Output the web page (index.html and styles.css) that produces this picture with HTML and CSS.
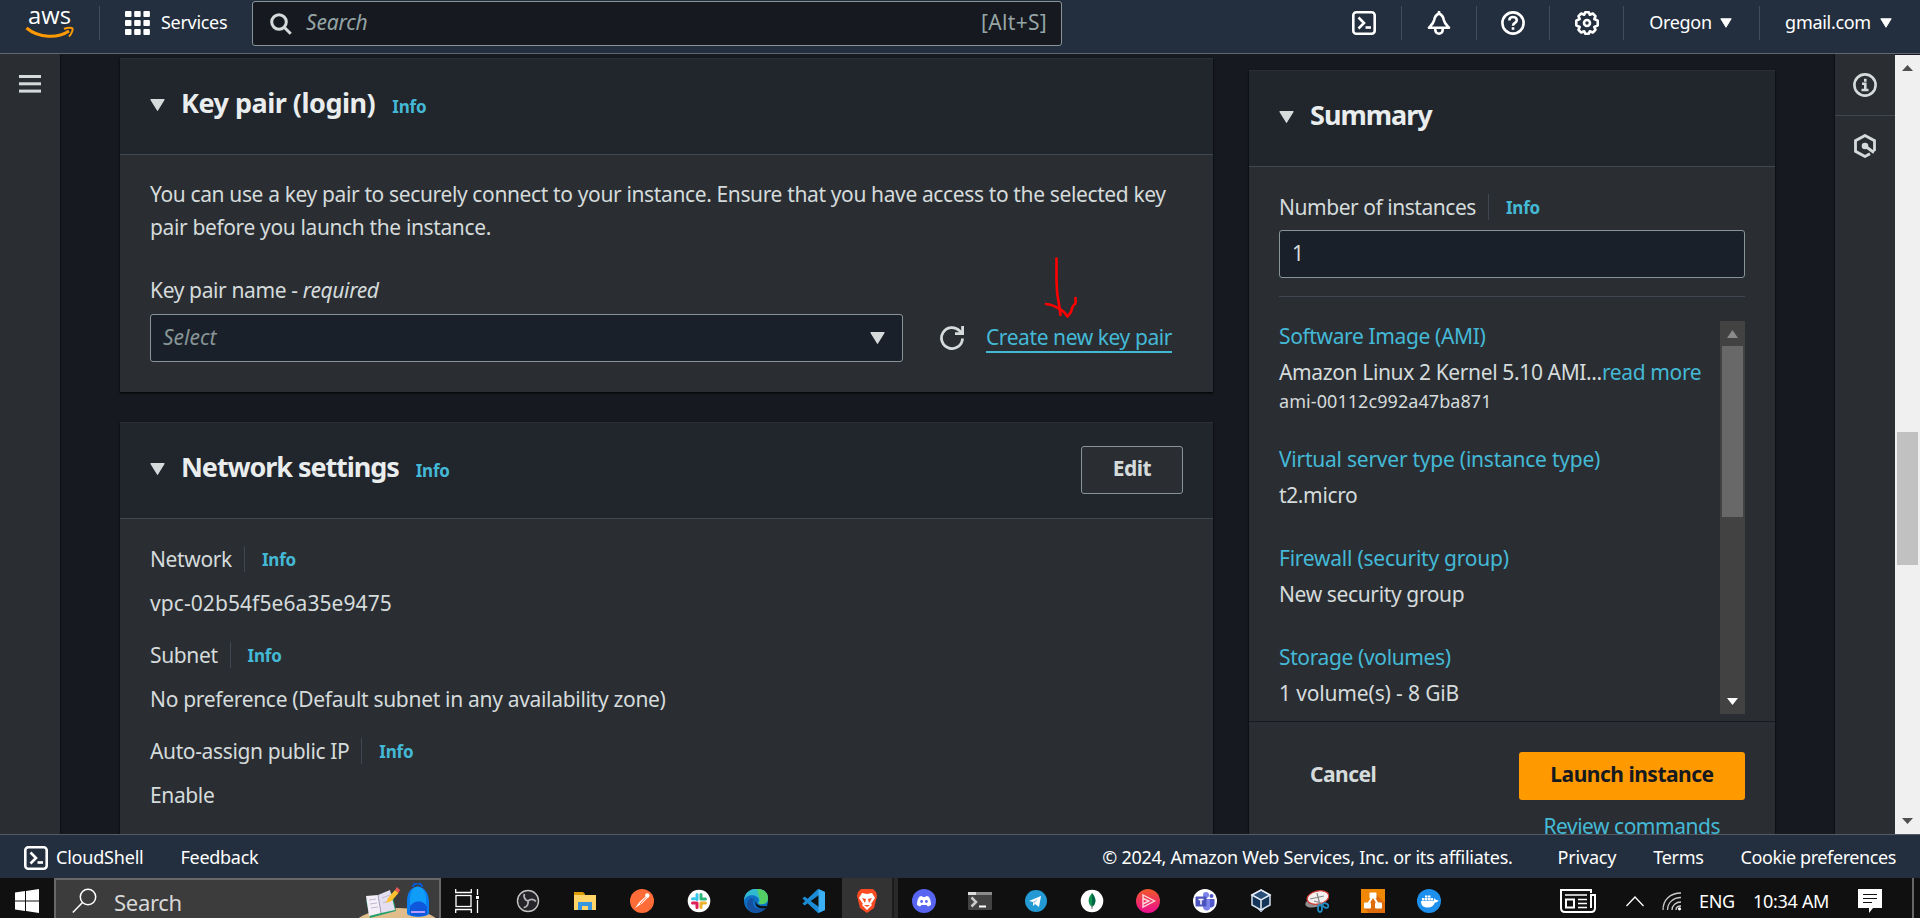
FILE: index.html
```html
<!DOCTYPE html>
<html lang="en">
<head>
<meta charset="utf-8">
<title>Launch an instance | EC2</title>
<link rel="stylesheet" href="styles.css">
</head>
<body>
<svg class="defs" width="0" height="0">
  <symbol id="shell" viewBox="0 0 24 24"><rect x="1.300" y="1.300" width="21.400" height="21.400" rx="3" fill="none" stroke="#fff" stroke-width="2.600"/><path d="M6.500 6.500l5.500 5.500-5.500 5.500" fill="none" stroke="#fff" stroke-width="2.600"/><path d="M13.500 16.500h5.500" stroke="#fff" stroke-width="2.600"/></symbol>
  <symbol id="caret" viewBox="0 0 15 12"><path d="M1 0.700h13L7.500 11.300z" fill="currentColor" stroke="currentColor" stroke-width="1.200" stroke-linejoin="round"/></symbol>
</svg>
<header class="nav">
  <div class="nav-logo">
    <svg class="logo" width="50" height="30" viewBox="0 0 50 30"><text x="3" y="15" class="logo-text" textLength="43" lengthAdjust="spacingAndGlyphs">aws</text><path d="M1.500 19C14 29.500 33 29.500 44 22" fill="none" stroke="#ff9900" stroke-width="3"/><path d="M39 20c4-2 8-1.500 8.500-.5s-.5 5-3.500 8" fill="none" stroke="#ff9900" stroke-width="2"/></svg>
  </div>
  <div class="nav-services">
    <svg width="25" height="24" viewBox="0 0 25 24" fill="#fff"><rect width="6.500" height="6" rx="1"/><rect x="9.200" width="6.500" height="6" rx="1"/><rect x="18.400" width="6.500" height="6" rx="1"/><rect y="9" width="6.500" height="6" rx="1"/><rect x="9.200" y="9" width="6.500" height="6" rx="1"/><rect x="18.400" y="9" width="6.500" height="6" rx="1"/><rect y="18" width="6.500" height="6" rx="1"/><rect x="9.200" y="18" width="6.500" height="6" rx="1"/><rect x="18.400" y="18" width="6.500" height="6" rx="1"/></svg>
    <span class="nav-text">Services</span>
  </div>
  <div class="nav-search">
    <svg width="22" height="22" viewBox="0 0 22 22" fill="none" stroke="#d5dbdb" stroke-width="3"><circle cx="9" cy="9" r="7.300"/><path d="M14.200 14.200l6.500 6.500"/></svg>
    <span class="nav-placeholder">Search</span>
    <span class="nav-key">[Alt+S]</span>
  </div>
  <div class="nav-tools">
    <div class="cell c1"><svg width="24" height="24"><use href="#shell"/></svg></div>
    <div class="cell c2"><svg width="24" height="24" viewBox="0 0 24 24" fill="none" stroke="#fff" stroke-width="2.600" stroke-linejoin="round"><path d="M12 2.500c-3.500 1.500-4.500 4-4.800 6.500C6.500 12.500 4.500 14 2 16.700h20C19.500 14 17.500 12.500 16.800 9 16.500 6.500 15.500 4 12 2.500z"/><path d="M12 0v3"/><path d="M8.300 17.500v1.500a3.700 3.700 0 0 0 7.400 0v-1.500"/></svg></div>
    <div class="cell c3"><svg width="24" height="24" viewBox="0 0 24 24" fill="none" stroke="#fff" stroke-width="2.600"><circle cx="12" cy="12" r="10.600"/><path d="M8.300 9.500C8.300 7 10 6 12 6s3.800 1.200 3.800 3.300c0 2.600-3.800 2.600-3.800 5.400"/><path d="M12 16.200v2.600"/></svg></div>
    <div class="cell c3"><svg width="24" height="24" viewBox="0 0 24 24" fill="none" stroke="#fff"><path stroke-width="2.600" stroke-linejoin="round" d="M10.200 1.300h3.600l1 2.400 3-1.200 2.700 2.700-1.200 2.800 3.400 1.700v4.600l-3.400 1.700 1.200 2.800-2.700 2.700-3-1.200-1 2.400h-3.600l-1-2.400-3 1.200-2.700-2.700L4.700 16l-3.400-1.700V9.700L4.700 8 3.500 5.200l2.700-2.700 3 1.200z"/><circle cx="12" cy="12" r="3" stroke-width="2.600"/></svg></div>
    <div class="cell c4"><span class="nav-text">Oregon</span><svg class="caret-nav"><use href="#caret"/></svg></div>
    <div class="cell c5"><span class="nav-text">gmail.com</span><svg class="caret-nav"><use href="#caret"/></svg></div>
  </div>
</header>

<div class="workspace">
  <aside class="rail rail-left">
    <svg width="22" height="20" viewBox="0 0 22 20" fill="#d5dbdb"><rect y="1" width="22" height="3"/><rect y="8.300" width="22" height="3"/><rect y="15.600" width="22" height="3"/></svg>
  </aside>
  <main class="content">
    <div class="forms">
      <section class="card">
        <div class="card-head"><svg class="caret"><use href="#caret"/></svg><h2 class="t-key">Key pair (login)</h2><a class="info">Info</a></div>
        <div class="card-body">
          <p class="desc">You can use a key pair to securely connect to your instance. Ensure that you have access to the selected key<br>pair before you launch the instance.</p>
          <div class="label">Key pair name - <em>required</em></div>
          <div class="select-row">
            <div class="field select"><em>Select</em><svg class="caret"><use href="#caret"/></svg></div>
            <svg class="refresh" width="24" height="24" viewBox="0 0 24 24" fill="none" stroke="#d5dbdb" stroke-width="2.800"><path d="M22.500 12.500A10.500 10.500 0 1 1 19.500 4.700L22 7.300"/><path d="M22.600 0v7.600H15"/></svg>
            <a class="create">Create new key pair</a>
            <svg class="mark" width="40" height="66" viewBox="0 0 40 66" fill="none" stroke="#f00" stroke-width="2.600" stroke-linecap="round" stroke-linejoin="round"><path d="M13.500 3.500v22c0 8 1 17 2.500 24 .8 4 1 7 1.500 10.500"/><path d="M3 49c7 0 12 4 18 8l3.500 4.500L28 57c1-5 2-7 4.500-8.500V43"/></svg>
          </div>
        </div>
      </section>
      <section class="card card-net">
        <div class="card-head"><svg class="caret"><use href="#caret"/></svg><h2 class="t-net">Network settings</h2><a class="info">Info</a><button class="btn edit">Edit</button></div>
        <div class="card-body">
          <div class="row"><span class="term">Network</span><a class="info">Info</a></div>
          <div class="value v-id">vpc-02b54f5e6a35e9475</div>
          <div class="row"><span class="term">Subnet</span><a class="info">Info</a></div>
          <div class="value v-pref">No preference (Default subnet in any availability zone)</div>
          <div class="row"><span class="term">Auto-assign public IP</span><a class="info">Info</a></div>
          <div class="value">Enable</div>
        </div>
      </section>
    </div>
    <section class="card summary">
      <div class="card-head"><svg class="caret"><use href="#caret"/></svg><h2 class="t-sum">Summary</h2></div>
      <div class="card-body">
        <div class="row row-tight"><span class="term">Number of instances</span><a class="info">Info</a></div>
        <div class="field count">1</div>
        <div class="details">
          <div class="items">
            <div class="item"><a>Software Image (AMI)</a><div class="item-v">Amazon Linux 2 Kernel 5.10 AMI...<a>read more</a></div><small>ami-00112c992a47ba871</small></div>
            <div class="item"><a class="t-wide">Virtual server type (instance type)</a><div class="item-v">t2.micro</div></div>
            <div class="item"><a class="t-wide">Firewall (security group)</a><div class="item-v">New security group</div></div>
            <div class="item"><a>Storage (volumes)</a><div class="item-v v-vol">1 volume(s) - 8 GiB</div></div>
          </div>
          <div class="inner-scroll">
            <svg width="11" height="8" viewBox="0 0 11 8"><path d="M5.500 0L11 8H0z" fill="#8a8a8a"/></svg>
            <div class="inner-thumb"></div>
            <svg class="down" width="11" height="7" viewBox="0 0 11 7"><path d="M0 0h11L5.500 7z" fill="#fff"/></svg>
          </div>
        </div>
      </div>
      <div class="actions">
        <div class="actions-row"><span class="cancel">Cancel</span><button class="btn launch">Launch instance</button></div>
        <a class="review">Review commands</a>
      </div>
    </section>
  </main>
  <aside class="rail rail-right">
    <div class="rail-cell"><svg width="24" height="24" viewBox="0 0 24 24" fill="none" stroke="#d5dbdb" stroke-width="2.600"><circle cx="12" cy="12" r="10.600"/><path d="M9 10.800h3.300v6M8.500 17h7M12.300 5.800v3"/></svg></div>
    <div class="rail-cell"><svg width="24" height="24" viewBox="0 0 24 24" fill="none" stroke="#d5dbdb" stroke-width="2.800"><path d="M21.500 17V6.700L12 1.500 2.500 6.700v10.600L12 22.500l5-2.800"/><circle cx="12" cy="12" r="3.300" fill="#d5dbdb" stroke="none"/><path d="M12 12l9 6.500"/></svg></div>
  </aside>
  <div class="scrollbar">
    <svg width="11" height="6" viewBox="0 0 11 6"><path d="M5.500 0L11 6H0z" fill="#505050"/></svg>
    <div class="thumb"></div>
    <svg class="down" width="11" height="6" viewBox="0 0 11 6"><path d="M0 0h11L5.500 6z" fill="#505050"/></svg>
  </div>
</div>

<footer class="foot">
  <svg width="24" height="24"><use href="#shell"/></svg>
  <span class="f-shell">CloudShell</span>
  <span class="f-feed">Feedback</span>
  <span class="f-copy">© 2024, Amazon Web Services, Inc. or its affiliates.</span>
  <span class="f-priv">Privacy</span>
  <span class="f-terms">Terms</span>
  <span class="f-cook">Cookie preferences</span>
</footer>

<div class="taskbar">
  <div class="start"><svg width="24" height="24" viewBox="0 0 24 24" fill="#fff"><path d="M0 3.500l10-1.400v9.400H0zM11 2l13-2v11.500H11zM0 12.500h10v9.400L0 20.500zM11 12.500h13V24l-13-2z"/></svg></div>
  <div class="tsearch">
    <svg width="26" height="26" viewBox="0 0 26 26" fill="none" stroke="#fff" stroke-width="1.500"><circle cx="16" cy="9" r="7.700"/><path d="M10.500 14.500L.8 24.500"/></svg>
    <span>Search</span>
    <svg class="art" width="82" height="36" viewBox="0 0 82 36">
      <path d="M0 36C22 22 60 21 80 36z" fill="#e2bd8c"/>
      <path d="M9 17l4 18 26-7-4-18z" fill="#27a06a"/>
      <path d="M9 13l12-1 3 18-12 3z" fill="#f3eef8"/><path d="M21 12l12-5 5 20-14 3z" fill="#e4dff0"/><path d="M21 12l3 18" stroke="#a8a0bd"/><path d="M12 17l7-1M13 21l7-1M14 25l7-1M25 15l8-3M26 20l7-3" stroke="#c1bad2"/>
      <path d="M29 20l2-5 7-8 3.500 3-7 8z" fill="#ffc12e"/><path d="M38 7l3.500 3 1.500-3-3-3z" fill="#ef5a55"/>
      <path d="M56 4c0-5 9-5 9 0" fill="none" stroke="#0757cf" stroke-width="2.500"/><path d="M50 18C50-1 71-1 72 18v12c0 5-22 5-22 0z" fill="#087cf0"/><path d="M53 15C54 0 67 0 69 14v8H53z" fill="#109df8"/><path d="M53 26c0-10 17-10 17 0v5c0 3-17 3-17 0z" fill="#1058db"/><path d="M54 29h14" stroke="#b89cff" stroke-width="2"/>
    </svg>
  </div>
  <div class="apps apps-before">
    <div class="app app-view"><svg viewBox="0 0 26 24" fill="none" stroke="#fff" stroke-width="1.300"><rect x="1" y="6.500" width="15" height="11"/><path d="M.7 0v3.500h15.600V0M.7 24v-3.500h15.600V24M22.500 0v6M22.500 11v13"/><rect x="21" y="7" width="3" height="3" fill="#fff" stroke="none"/></svg></div>
    <div class="app"><svg viewBox="0 0 24 24"><circle cx="12" cy="12" r="10.500" fill="#252428" stroke="#c4c4c4" stroke-width="1.400"/><g fill="none" stroke="#b8b8b8" stroke-width="1.800"><path d="M12 12c-3-1-5-4-3.500-7"/><path d="M12 12c-3-1-5-4-3.500-7" transform="rotate(120 12 12)"/><path d="M12 12c-3-1-5-4-3.500-7" transform="rotate(240 12 12)"/></g></svg></div>
    <div class="app"><svg viewBox="0 0 24 24"><path d="M1 3h9l2 2v5H1z" fill="#dc9e08"/><path d="M1 6h22v15H1z" fill="#ffd567"/><path d="M5 21v-8h14v8h-4v-4H9v4z" fill="#3895df"/></svg></div>
    <div class="app"><svg viewBox="0 0 24 24"><circle cx="12" cy="12" r="12" fill="#ff6c37"/><path d="M5 19l4.500-6L16 7l2 1.500-6 6z" fill="#fff"/><circle cx="17.300" cy="6.500" r="2.200" fill="#fff"/><path d="M10 15l6-6.500" stroke="#ff6c37"/></svg></div>
    <div class="app"><svg viewBox="0 0 24 24"><circle cx="12" cy="12" r="11.300" fill="#fff"/><g stroke-width="3" stroke-linecap="round"><path d="M10 5.500v5M5.500 9.800h2" stroke="#36c5f0"/><path d="M14 5.500v4.500M14 10h4.500" stroke="#2eb67d"/><path d="M14 14v4.500M14 14h4.500" stroke="#ecb22e"/><path d="M10 14v4.500M5.500 14H10" stroke="#e01e5a"/></g></svg></div>
    <div class="app"><svg viewBox="0 0 24 24"><circle cx="12" cy="12" r="12" fill="#0c6fc3"/><path d="M0 12C0-4 24-4 24 9c0 5-4 7-9 6-2-1 0-2 0-4C14 5 2 4 0 12z" fill="#30b9cf"/><path d="M13 0c7 0 11 4 11 9 0 5-4 7-9 6 0-1 1-2 1-4z" fill="#54cf63"/><path d="M10 10c-4 6 2 12 11 9-4 7-17 6-18-3 0-5 4-8 7-6z" fill="#1650a0"/><path d="M13 10c-3 3 0 8 9 7l1 1-1 1c-9 2-13-4-9-9z" fill="#101010"/></svg></div>
    <div class="app"><svg viewBox="0 0 24 24"><path d="M17 0l7 3v18l-7 3L1.500 9.500l2-2L18 18V6L3.500 16.500l-2-2z" fill="#1c8bd5"/><path d="M17.500 0L24 3v18l-6.500 3z" fill="#3baef4"/></svg></div>
  </div>
  <div class="app app-on"><svg viewBox="0 0 24 24"><path d="M6 0h12l3 3 1 4-3 12-7 5-7-5L2 7l1-4z" fill="#fb4b22"/><path d="M7 4l5 1 5-1 3 5-4 6 1 1-5 5-5-5 1-1-4-6z" fill="#fff"/><path d="M7 9l4 1-1 4zM17 9l-4 1 1 4zM9 16h6l-3 2z" fill="#fb4b22"/></svg></div>
  <div class="apps apps-after">
    <div class="app"><svg viewBox="0 0 24 24"><circle cx="12" cy="12" r="12" fill="#5865f2"/><path d="M5 16c0-4 1-7 2.500-8.500L10 7l.8 1h2.400l.8-1 2.500.5C18 9 19 12 19 16l-3 1.500-1.500-1.500h-5L8 17.500z" fill="#fff"/><circle cx="9.600" cy="12.500" r="1.400" fill="#5865f2"/><circle cx="14.400" cy="12.500" r="1.400" fill="#5865f2"/></svg></div>
    <div class="app"><svg viewBox="0 0 24 24"><rect y="3" width="24" height="18" rx="1" fill="#434343"/><path d="M0 3h24v3H0z" fill="#8b8b8b"/><path d="M0 3h8v3H0z" fill="#ddd"/><path d="M3.500 8.500L8 13l-4.500 4.500" fill="none" stroke="#ccc" stroke-width="2.500"/><path d="M11 17.500h7" stroke="#fff" stroke-width="2"/></svg></div>
    <div class="app"><svg viewBox="0 0 24 24"><circle cx="12" cy="12" r="11" fill="#239ad4"/><path d="M5 12l12-5-2 11-4-3-2 2v-4z" fill="#fff"/><path d="M9 13l5-3.500-3.500 5z" fill="#a7cfe5"/></svg></div>
    <div class="app"><svg viewBox="0 0 24 24"><circle cx="12" cy="12" r="11.300" fill="#fff"/><path d="M12 4c5 6 4 11 0 14-4-3-5-8 0-14z" fill="#12924f"/><path d="M12 4c5 6 4 11 0 14z" fill="#046747"/><path d="M12 16v4" stroke="#777"/></svg></div>
    <div class="app"><svg viewBox="0 0 24 24"><defs><linearGradient id="pl" x2="0" y2="1"><stop stop-color="#f05a28"/><stop offset="1" stop-color="#ed0c92"/></linearGradient></defs><circle cx="12" cy="12" r="12" fill="url(#pl)"/><path d="M7 6l11.500 6L7 18zM7 9.500l6 2.500-6 3" fill="none" stroke="#ffd8df" stroke-width="1.400"/></svg></div>
    <div class="app"><svg viewBox="0 0 24 24"><circle cx="12" cy="12" r="12" fill="#fff"/><circle cx="13" cy="6" r="3" fill="#7b83eb"/><circle cx="18.500" cy="7" r="2" fill="#5059c9"/><path d="M10 10h8v6c0 7-8 7-8 2z" fill="#7b83eb"/><path d="M17 10h4.500v5c0 3-3 4-4.500 3z" fill="#5059c9"/><rect x="2.500" y="7.500" width="11" height="10" rx="1" fill="#4b53bc"/><path d="M5.500 10.500h5M8 10.500v5" stroke="#fff" stroke-width="1.500"/></svg></div>
    <div class="app"><svg viewBox="0 0 24 24"><path d="M7 18l5 5 5-5" fill="#72829f" stroke="#aab6c9"/><path d="M12 1l9 5v10l-9 5-9-5V6z" fill="#143458" stroke="#d5e1ef" stroke-width="1.500"/><path d="M3 6l9 5 9-5-9-5zM12 11v10" fill="#284e78" stroke="#e7eef6" stroke-width="1.500"/></svg></div>
    <div class="app"><svg viewBox="0 0 24 24"><ellipse cx="11" cy="13" rx="11" ry="5" transform="rotate(-15 11 13)" fill="#8f8f8f"/><ellipse cx="13" cy="8.500" rx="11" ry="6.500" transform="rotate(-12 13 8.500)" fill="#f5f1f1" stroke="#d43c36" stroke-width="1.300"/><path d="M12 4l3 12M5 10l14-3M16 14l-7-2" stroke="#888" stroke-width="1.200"/><g fill="none" stroke="#238ac1" stroke-width="1.800"><ellipse cx="15" cy="19.500" rx="2" ry="3.500"/><ellipse cx="20.500" cy="16.500" rx="2" ry="3" transform="rotate(-65 20.500 16.500)"/></g></svg></div>
    <div class="app"><svg viewBox="0 0 24 24"><path d="M0 0h24v24H0z" fill="#f08705"/><path d="M15 5l9 9v10H8l-5-5z" fill="#df6c0c"/><path d="M12 7L6.500 16M12 7l5.500 9" stroke="#fff" stroke-width="2"/><rect x="8.500" y="3.500" width="7" height="6" rx="1" fill="#fff"/><rect x="3" y="13.500" width="7" height="6" rx="1" fill="#fff"/><rect x="14" y="13.500" width="7" height="6" rx="1" fill="#fff"/></svg></div>
    <div class="app"><svg viewBox="0 0 24 24"><circle cx="12" cy="12" r="12" fill="#1d90ed"/><path d="M4 12h12.500l1-3 1.500 2 2.500.3c-1 2-2 2.200-3.500 2.200C16 18 13 19 9.500 18.500 5.500 18 4 15.500 4 12zM5 9h2.500v2.500H5zM8 9h2.500v2.500H8zM11 9h2.500v2.500H11zM8 6.500h2.500v2H8zM11 6.500h2.500v2H11zM13.800 9H16v2.500h-2.200z" fill="#fff"/></svg></div>
  </div>
  <div class="tray">
    <svg class="news" width="36" height="24" viewBox="0 0 36 24" fill="none" stroke="#fff" stroke-width="2"><path d="M31 4V1H1v18q0 4 4 4h26q4 0 4-4V6h-4v13"/><path d="M5 6h22M18 10.500h9M18 14.500h9M18 18.500h9" stroke-width="1.600"/><rect x="6" y="10.500" width="8" height="8"/></svg>
    <svg class="chev" width="18" height="11" viewBox="0 0 18 11" fill="none" stroke="#fff" stroke-width="1.300"><path d="M.5 10L9 1l8.500 9"/></svg>
    <svg class="wifi" width="20" height="19" viewBox="0 0 20 19" fill="none" stroke="#ccc" stroke-width="1.300"><path d="M1 18C1 8 8 1 19 1M5.500 18C5.500 11 11 5.500 19 5.500M10 18c0-4.500 4-8 9-8"/><path d="M14 18c0-2.500 2-4 5-4"/><circle cx="17.500" cy="16.800" r="1.600" fill="#fff" stroke="none"/></svg>
    <span class="lang">ENG</span><span class="clock">10:34 AM</span>
    <svg class="note" width="24" height="24" viewBox="0 0 24 24"><path d="M0 0h24v19h-9l-4 5v-5H0z" fill="#fff"/><path d="M5 5.500h14M5 9.500h14M5 13.500h9" stroke="#111" stroke-width="1.200"/></svg>
  </div>
</div>
</body>
</html>
```
FILE: styles.css
```css
* { box-sizing: border-box; }
body { margin: 0; width: 1920px; height: 918px; overflow: hidden; display: flex; flex-direction: column; background: #16191f; color: #d5dbdb; font-family: "Noto Sans", "Open Sans", sans-serif; font-stretch: 90%; font-size: 21px; line-height: 33px; letter-spacing: -0.37px; white-space: nowrap; }
.defs { position: absolute; }
svg { flex: none; display: block; }
a { color: #44b9d6; }
h2 { margin: 0; font-size: 27px; font-weight: 700; letter-spacing: -0.5px; color: #eaeded; }
.t-net { letter-spacing: -1.08px; }
.t-sum { letter-spacing: -1px; }

.nav { height: 54px; flex: none; display: flex; align-items: center; padding-bottom: 7px; background: #232f3e; border-bottom: 1px solid #5f666f; color: #fff; font-size: 18px; letter-spacing: -0.3px; }
.nav-logo { width: 100px; height: 34px; padding: 3px 0 0 25px; border-right: 1px solid #414d5c; }
.logo { overflow: visible; }
.logo-text { font: 500 24px "Open Sans", sans-serif; fill: #fff; letter-spacing: 0; }
.nav-text { padding-bottom: 1px; }
.nav-services { width: 152px; padding-left: 25px; display: flex; align-items: center; gap: 11px; }
.nav-search { width: 810px; height: 45px; margin-top: 1px; border: 1px solid #879596; border-radius: 3px; background: #16191f; display: flex; align-items: center; padding: 0 14px 0 17px; }
.nav-search span { padding-bottom: 2px; }
.nav-placeholder { margin-left: 14px; font-style: italic; color: #95a5a6; font-size: 21px; letter-spacing: -0.2px; }
.nav-key { margin-left: auto; color: #95a5a6; font-size: 21px; letter-spacing: 0.3px; }
.nav-tools { margin-left: 264px; display: flex; align-items: center; }
.cell { height: 34px; border-right: 1px solid #414d5c; display: flex; align-items: center; justify-content: center; }
.c1 { width: 76px; }
.c2 { width: 75px; }
.c3 { width: 73px; }
.cell.c3 + .c3 { width: 74px; }
.c4 { width: 136px; gap: 8px; padding-right: 2px; }
.c5 { width: 159px; gap: 9px; border: 0; padding-right: 2px; }
.caret-nav { width: 12px; height: 10px; }
.caret { width: 15px; height: 12px; }

.workspace { height: 780px; flex: none; display: flex; overflow: hidden; }
.rail { width: 60px; background: #2a2e33; display: flex; flex-direction: column; align-items: center; box-shadow: 0 0 2px #000; }
.rail-left { padding-top: 20px; }
.rail-right { padding-top: 1px; }
.rail-cell { width: 60px; height: 61px; display: flex; align-items: center; justify-content: center; border-bottom: 1px solid #414750; }
.rail-cell + .rail-cell { border: 0; height: 60px; }
.content { width: 1775px; display: flex; gap: 36px; padding-left: 60px; align-items: flex-start; }
.forms { width: 1093px; padding-top: 4px; }
.card { background: #2a2e33; box-shadow: 0 1px 2px #000; }
.card-net { margin-top: 30px; height: 450px; }
.card-head { height: 97px; background: #21252c; border-top: 1px solid #2c3034; border-bottom: 1px solid #414750; display: flex; align-items: center; padding: 0 30px 3px; }
.card-head h2 { margin-left: 16px; padding-bottom: 5px; }
.card-head .info { margin-left: 17px; padding-top: 3px; }
.info { font-size: 17px; font-weight: 700; letter-spacing: -0.2px; }
.card-body { padding: 23px 30px 30px; }
.desc { margin: 0; }
.label { margin: 30px 0 7px; }
.field { height: 48px; border: 1px solid #879596; border-radius: 3px; background: #1a2029; display: flex; align-items: center; padding: 0 17px 1px 12px; }
.select-row { display: flex; align-items: center; position: relative; }
.select { width: 753px; justify-content: space-between; color: #879596; }
.select em { letter-spacing: 0; }
.select .caret { color: #d5dbdb; }
.refresh { margin: 0 22px 0 37px; }
.create { line-height: 26px; border-bottom: 2px solid #44b9d6; padding-bottom: 1px; letter-spacing: -0.42px; }
.mark { position: absolute; left: 893px; top: -59px; }
.btn { font: inherit; font-weight: 700; height: 48px; border-radius: 3px; letter-spacing: -0.5px; padding: 0 0 3px; }
.edit { width: 102px; margin-left: auto; margin-top: 2px; border: 1px solid #879596; background: #2a2e33; color: #d5dbdb; }
.row { display: flex; align-items: center; height: 33px; margin-bottom: 12px; }
.value { margin-bottom: 18px; }
.v-id { letter-spacing: 0.08px; }
.v-pref { letter-spacing: -0.31px; }
.row .term { line-height: 26px; padding-right: 12px; border-right: 1px solid #414750; }
.row .info { margin-left: 17px; padding-top: 2px; }
.row.row-tight { margin-bottom: 7px; letter-spacing: -0.46px; }

.summary { width: 526px; margin-top: 16px; height: 780px; }
.summary .card-body { padding-bottom: 0; }
.details { border-top: 1px solid #414750; margin-top: 18px; padding-top: 24px; display: flex; justify-content: space-between; }
.items { height: 393px; margin-top: -1px; }
.item { margin-bottom: 30px; }
.item-v { margin-top: 3px; }
.t-wide { letter-spacing: -0.24px; }
.v-vol { letter-spacing: -0.15px; }
.item small { display: block; font-size: 18px; line-height: 24px; letter-spacing: 0.07px; }
.inner-scroll { width: 25px; height: 393px; background: #424242; display: flex; flex-direction: column; align-items: center; padding: 9px 0; }
.inner-thumb { width: 21px; height: 171px; background: #686868; margin-top: 8px; }
.down { margin-top: auto; }
.actions { margin-top: 7px; border-top: 1px solid #16191f; padding: 30px 30px 0; display: flex; flex-direction: column; align-items: flex-end; }
.actions-row { width: 100%; display: flex; align-items: center; justify-content: space-between; padding-left: 31px; }
.cancel { font-weight: 700; letter-spacing: -0.5px; padding-bottom: 3px; }
.launch { width: 226px; border: 0; background: #ff9900; color: #16191f; }
.review { margin: 10px 25px 0 0; letter-spacing: -0.48px; }

.scrollbar { width: 25px; margin-top: 1px; background: #f0f0f0; display: flex; flex-direction: column; align-items: center; padding: 10px 0; }
.thumb { width: 21px; height: 133px; margin-top: 361px; background: #c1c1c1; }

.foot { height: 44px; flex: none; background: #232f3e; border-top: 1px solid #545b64; display: flex; align-items: center; padding: 2px 24px 0; color: #fff; font-size: 18px; letter-spacing: -0.4px; }
.foot span { padding-bottom: 1px; }
.f-shell { margin-left: 8px; letter-spacing: -0.2px; }
.f-feed { margin-left: 37px; letter-spacing: -0.3px; }
.f-copy { margin-left: auto; letter-spacing: -0.26px; }
.f-priv { margin-left: 45px; letter-spacing: -0.2px; }
.f-terms { margin-left: 37px; letter-spacing: -0.3px; }
.f-cook { margin-left: 37px; }

.taskbar { height: 40px; flex: none; background: #101010; display: flex; overflow: hidden; color: #fff; }
.start { width: 54px; padding: 11px 0 0 15px; }
.tsearch { width: 387px; height: 44px; border: 2px solid #686868; background: #3c3c3c; display: flex; padding: 8px 0 0 16px; color: #d8d8d8; font-size: 22px; letter-spacing: -0.3px; }
.tsearch span { margin-left: 16px; line-height: 29px; }
.art { margin: -5px 0 0 auto; }
.apps { display: flex; }
.app { height: 46px; display: flex; justify-content: center; align-items: center; }
.app svg { width: 24px; height: 24px; }
.apps-before { width: 401px; }
.apps-before .app { width: 57px; }
.apps-before .app-view { width: 58px; padding-right: 5px; }
.apps-before .app-view svg { width: 26px; }
.app-on { width: 50px; background: #333; margin-right: 4px; box-shadow: 2px 0 #1b1b1b, 6px 0 #292929; }
.apps-after .app { width: 56.100px; }
.tray { margin-left: auto; border-right: 2px solid #666; margin-right: 6px; display: flex; height: 46px; align-items: center; font-size: 18px; letter-spacing: -0.3px; }
.chev { margin-left: 30px; }
.wifi { margin-left: 18px; }
.lang { margin-left: 17px; width: 35px; }
.clock { margin-left: 19px; width: 77px; }
.note { margin: 0 30px 0 28px; }
```
